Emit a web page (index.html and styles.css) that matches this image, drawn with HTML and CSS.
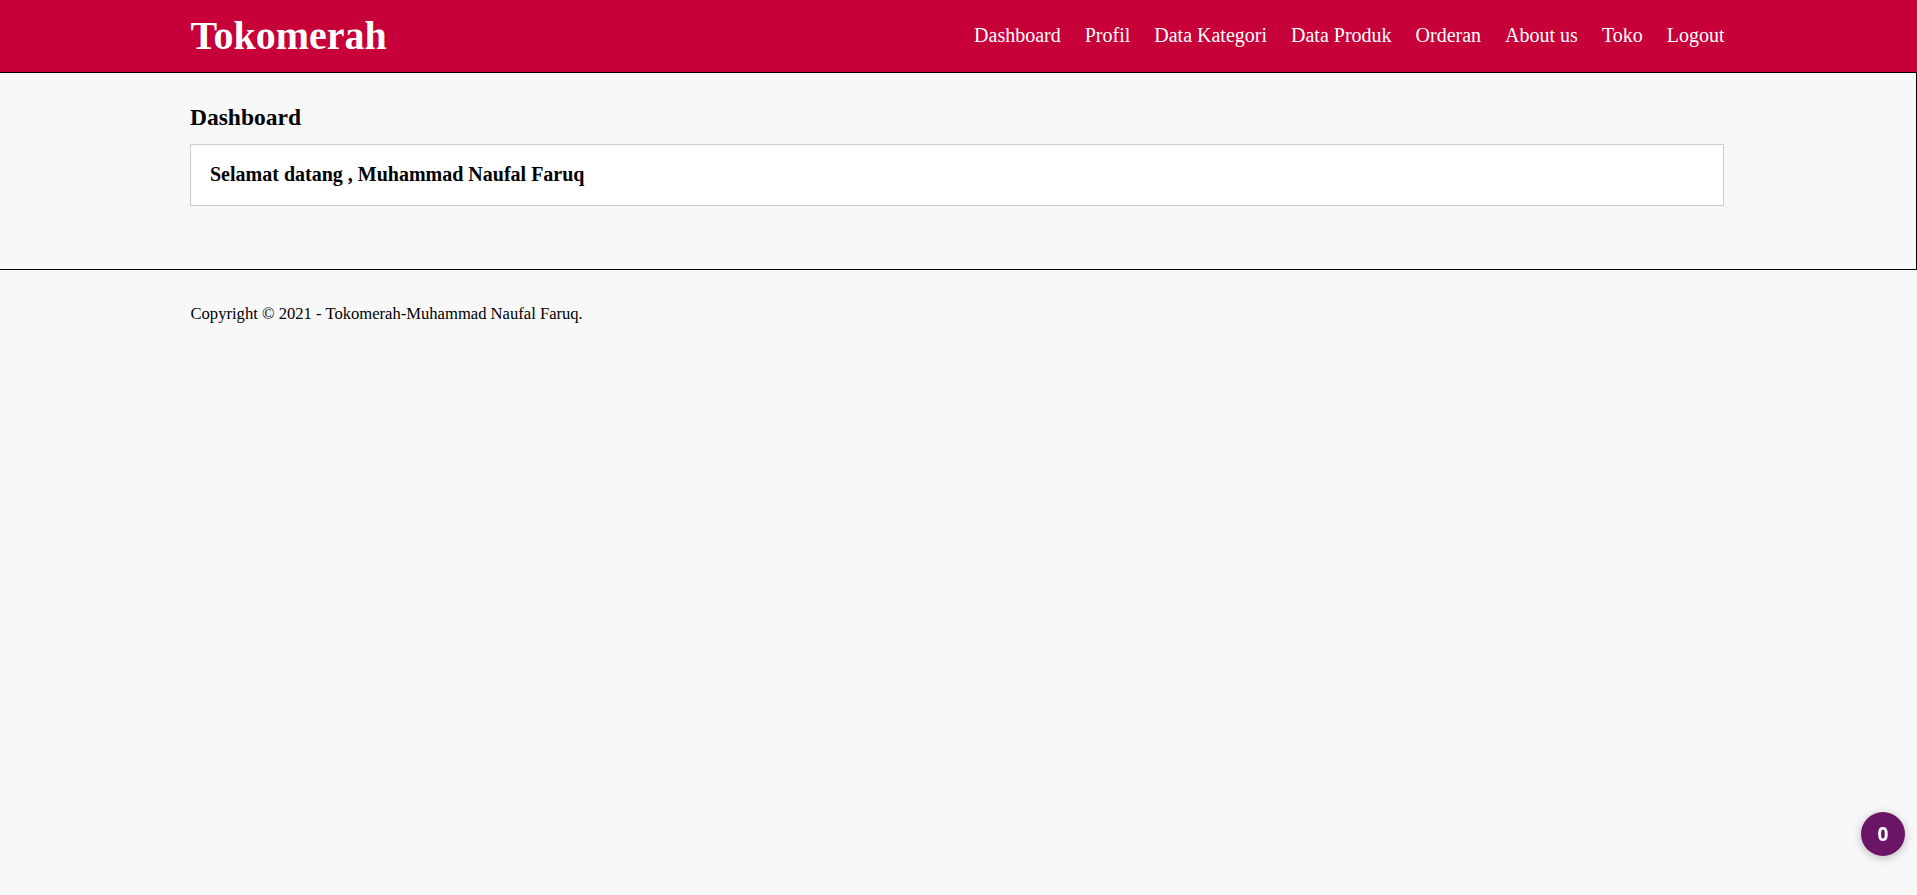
FILE: index.html
```html
<!DOCTYPE html>
<html lang="id">
<head>
<meta charset="utf-8">
<title>Tokomerah - Dashboard</title>
<link rel="stylesheet" href="styles.css">
</head>
<body>
<header class="topbar">
  <div class="container topbar-inner">
    <h1 class="brand">Tokomerah</h1>
    <nav class="menu">
      <a href="#">Dashboard</a>
      <a href="#">Profil</a>
      <a href="#">Data Kategori</a>
      <a href="#">Data Produk</a>
      <a href="#">Orderan</a>
      <a href="#">About us</a>
      <a href="#">Toko</a>
      <a href="#">Logout</a>
    </nav>
  </div>
</header>
<section class="section">
  <div class="container">
    <h2 class="page-title">Dashboard</h2>
    <div class="box">
      <h3 class="welcome">Selamat datang , Muhammad Naufal Faruq</h3>
    </div>
  </div>
</section>
<footer class="footer">
  <div class="container">
    <small class="copy">Copyright &copy; 2021 - Tokomerah-Muhammad Naufal Faruq.</small>
  </div>
</footer>
<div class="badge">0</div>
</body>
</html>
```

FILE: styles.css
```css
* {
  box-sizing: border-box;
}

html, body {
  margin: 0;
  padding: 0;
}

body {
  background: #f8f8f8;
  font-family: "Liberation Serif", "Times New Roman", serif;
  color: #000;
  min-height: 895px;
}

.container {
  width: 1534px;
  margin: 0 auto;
  position: relative;
  left: -1px;
}

.topbar {
  background: #c70039;
  height: 72px;
}

.topbar-inner {
  height: 72px;
  display: flex;
  align-items: center;
  justify-content: space-between;
}

.brand {
  margin: 0;
  font-size: 40px;
  line-height: 46px;
  font-weight: bold;
  color: #fff;
}

.menu {
  display: flex;
  gap: 24px;
  padding-bottom: 2px;
}

.menu a {
  color: #fff;
  text-decoration: none;
  font-size: 20px;
  line-height: 23px;
}

.section {
  border-top: 1px solid #000;
  border-right: 1px solid #000;
  border-bottom: 1px solid #000;
  padding: 30px 0 0;
  height: 198px;
}

.page-title {
  margin: 0 0 13px;
  font-size: 23.5px;
  line-height: 28px;
  font-weight: bold;
}

.box {
  background: #fff;
  border: 1px solid #ccc;
  padding: 18px 19px 19px;
}

.welcome {
  margin: 0;
  font-size: 20px;
  line-height: 23px;
  font-weight: bold;
}

.footer {
  padding-top: 35px;
}

.copy {
  display: block;
  font-size: 16.6px;
  line-height: 18px;
}

.badge {
  position: fixed;
  right: 12px;
  bottom: 39px;
  width: 44px;
  height: 44px;
  border-radius: 50%;
  background: #6b1566;
  color: #fff;
  font-family: "Open Sans", "Liberation Sans", sans-serif;
  font-weight: bold;
  font-size: 19px;
  display: flex;
  align-items: center;
  justify-content: center;
  box-shadow: 0 2px 10px rgba(0, 0, 0, 0.25);
}
```
